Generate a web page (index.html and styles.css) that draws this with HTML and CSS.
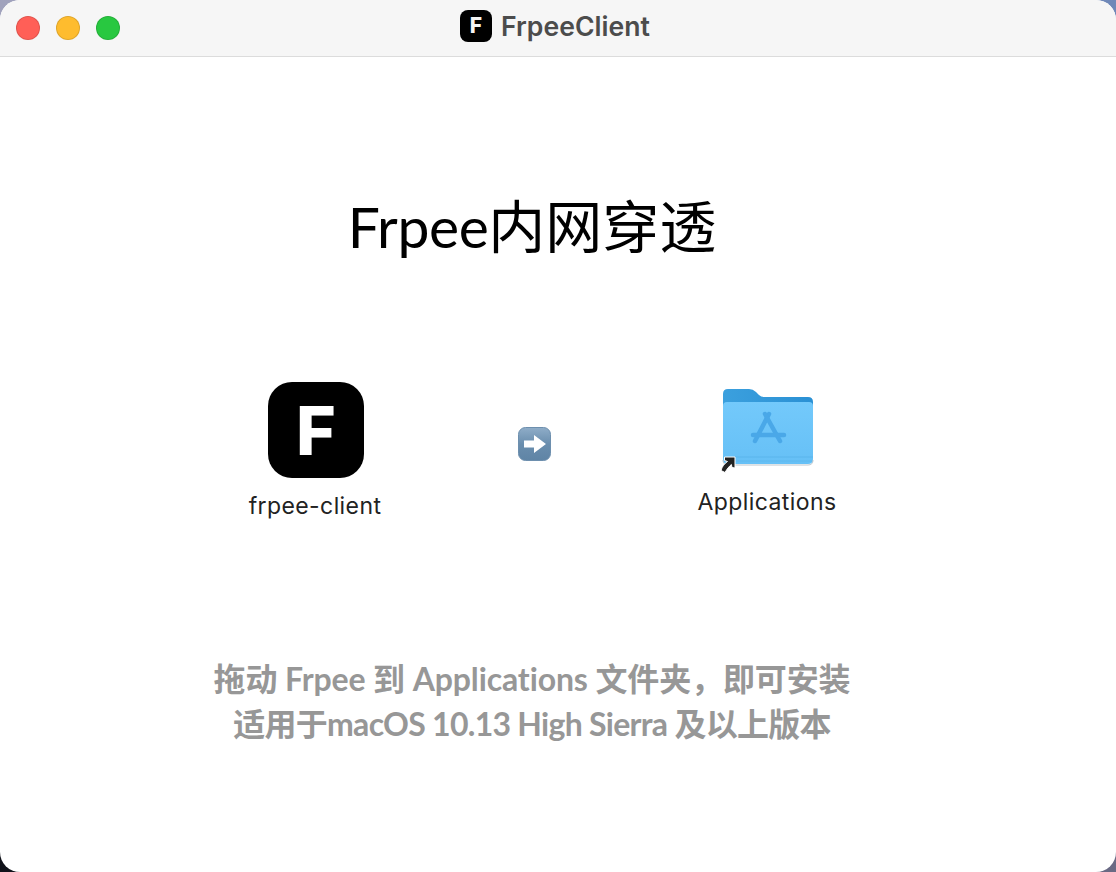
FILE: index.html
```html
<!DOCTYPE html>
<html lang="zh-CN">
<head>
  <meta charset="UTF-8">
  <title>FrpeeClient</title>
  <link rel="stylesheet" href="styles.css">
</head>
<body>
  <div class="window">
    <header class="titlebar">
      <div class="lights">
        <span class="light red"></span>
        <span class="light yellow"></span>
        <span class="light green"></span>
      </div>
      <div class="title">
        <span class="title-icon">F</span>
        <span class="title-text">FrpeeClient</span>
      </div>
    </header>

    <main class="content">
      <h1 class="heading"><span class="heading-latin">Frpee</span>内网穿透</h1>

      <div class="install-row">
        <div class="item app-item">
          <div class="app-icon">F</div>
          <div class="item-label">frpee-client</div>
        </div>

        <svg class="arrow" width="33" height="34" viewBox="0 0 33 34">
          <defs>
            <linearGradient id="arrowBg" x1="0" y1="0" x2="0" y2="1">
              <stop offset="0" stop-color="#8fadc8"/>
              <stop offset="0.500" stop-color="#6a8eae"/>
              <stop offset="1" stop-color="#5f84a5"/>
            </linearGradient>
          </defs>
          <rect x="0.500" y="0.500" width="32" height="33" rx="7" fill="url(#arrowBg)" stroke="#6d8fae"/>
          <path d="M6 13.500h10V8L28 17 16 26V20.500H6z" fill="#fff"/>
        </svg>

        <div class="item folder-item">
          <div class="folder-wrap">
            <svg class="folder" width="96" height="84" viewBox="0 0 96 84">
              <defs>
                <linearGradient id="folderFront" x1="0" y1="0" x2="0" y2="1">
                  <stop offset="0" stop-color="#73c9fb"/>
                  <stop offset="1" stop-color="#66c0f6"/>
                </linearGradient>
                <linearGradient id="folderBack" x1="0" y1="0" x2="1" y2="0">
                  <stop offset="0" stop-color="#3ba0de"/>
                  <stop offset="1" stop-color="#2a90d4"/>
                </linearGradient>
              </defs>
              <path d="M3 20V8q0-5 5-5h21q4 0 7 3l3 3q2 2 5 2h44q5 0 5 5v10H3z" fill="url(#folderBack)"/>
              <path d="M3 20q0-4 4-4h82q4 0 4 4v53q0 5-5 5H8q-5 0-5-5z" fill="url(#folderFront)"/>
              <path d="M3 71h90" stroke="#5bb5ec" stroke-width="1"/>
              <path d="M3 75h90" stroke="#5fb8ee" stroke-width="1"/>
              <path d="M3 74q0 5 5 5h80q5 0 5-5" fill="none" stroke="#bcc6cd" stroke-width="1"/>
              <g fill="none" stroke="#4aa8e8" stroke-width="4.500" stroke-linecap="round">
                <path d="M49 28 35 55"/>
                <path d="M45 28 60 55"/>
                <path d="M33 49h31"/>
              </g>
            </svg>
            <svg class="alias" width="16" height="17" viewBox="0 0 16 17">
              <path d="M4.500 1h10.500v11l-3-.5-.6-3C9 10.500 7 13 5 16.500L1 14.500C2 10.500 4.500 7.500 7.500 5.500L4.500 4.500z" fill="#222" stroke="#fff" stroke-width="1"/>
            </svg>
          </div>
          <div class="item-label">Applications</div>
        </div>
      </div>

      <div class="note">
        <p class="note-first">拖动 Frpee 到 Applications 文件夹，即可安装</p>
        <p class="note-second">适用于macOS 10.13 High Sierra 及以上版本</p>
      </div>
    </main>
  </div>
</body>
</html>
```

FILE: styles.css
```css
* {
  box-sizing: border-box;
  margin: 0;
  padding: 0;
}

html, body {
  width: 1116px;
  height: 872px;
  overflow: hidden;
}

body {
  background:
    linear-gradient(to right, #a0a2bc, #6f88b8) top / 100% 50% no-repeat,
    linear-gradient(to right, #10121a, #6a6a84) bottom / 100% 50% no-repeat;
  font-family: "Lato", "Noto Sans CJK SC", sans-serif;
}

.window {
  width: 1116px;
  height: 872px;
  background: #fff;
  border-radius: 20px;
  overflow: hidden;
  display: flex;
  flex-direction: column;
}

.titlebar {
  height: 57px;
  flex: none;
  background: #f6f6f6;
  border-bottom: 1px solid #dcdcdc;
  display: flex;
  align-items: center;
  position: relative;
}

.lights {
  display: flex;
  gap: 16px;
  padding-left: 16px;
}

.light {
  width: 24px;
  height: 24px;
  border-radius: 50%;
  border: 1px solid rgba(0, 0, 0, 0.12);
}

.red { background: #ff5f57; }
.yellow { background: #febc2e; }
.green { background: #28c840; }

.title {
  position: absolute;
  left: 460px;
  top: 10px;
  display: flex;
  align-items: center;
  gap: 9px;
}

.title-icon {
  width: 32px;
  height: 32px;
  background: #000;
  color: #f4f4f4;
  border-radius: 8px;
  font-family: "Inter", sans-serif;
  font-weight: 800;
  font-size: 21px;
  line-height: 32px;
  text-align: center;
}

.title-text {
  font-family: "Inter", sans-serif;
  font-weight: 600;
  font-size: 26.600px;
  color: #4c4c4c;
}

.content {
  flex: 1;
  display: flex;
  flex-direction: column;
  align-items: center;
  padding-right: 52px;
}

.heading {
  margin-top: 127px;
  font-weight: 400;
  font-size: 57px;
  line-height: 84px;
  color: #000;
  white-space: nowrap;
}

.heading-latin {
  letter-spacing: -0.400px;
}

.install-row {
  width: 100%;
  margin-top: 114px;
  height: 160px;
  display: flex;
}

.item {
  display: flex;
  flex-direction: column;
  align-items: center;
}

.app-item {
  margin-left: 249px;
  width: 134px;
}

.app-icon {
  width: 96px;
  height: 96px;
  background: #000;
  color: #fff;
  border-radius: 24px;
  font-family: "Inter", sans-serif;
  font-weight: 800;
  font-size: 68px;
  line-height: 96px;
  text-align: center;
}

.item-label {
  font-family: "Inter", sans-serif;
  font-size: 23px;
  letter-spacing: 0.400px;
  line-height: 28px;
  color: #222;
  white-space: nowrap;
}

.app-item .item-label {
  margin-top: 14px;
  margin-right: 2px;
}

.arrow {
  margin: 45px 0 0 135px;
}

.folder-item {
  margin-left: 146px;
  width: 140px;
}

.folder-wrap {
  position: relative;
  width: 96px;
  height: 84px;
  margin-left: 2px;
  margin-top: 4px;
}

.alias {
  position: absolute;
  left: 0;
  bottom: -3px;
}

.folder-item .item-label {
  margin-top: 18px;
}

.note {
  margin-top: 114px;
  text-align: center;
  font-weight: 700;
  font-size: 32px;
  line-height: 45px;
  color: #979797;
  white-space: nowrap;
}

.note-first {
  letter-spacing: -0.120px;
}

.note-second {
  letter-spacing: -0.720px;
}
```
